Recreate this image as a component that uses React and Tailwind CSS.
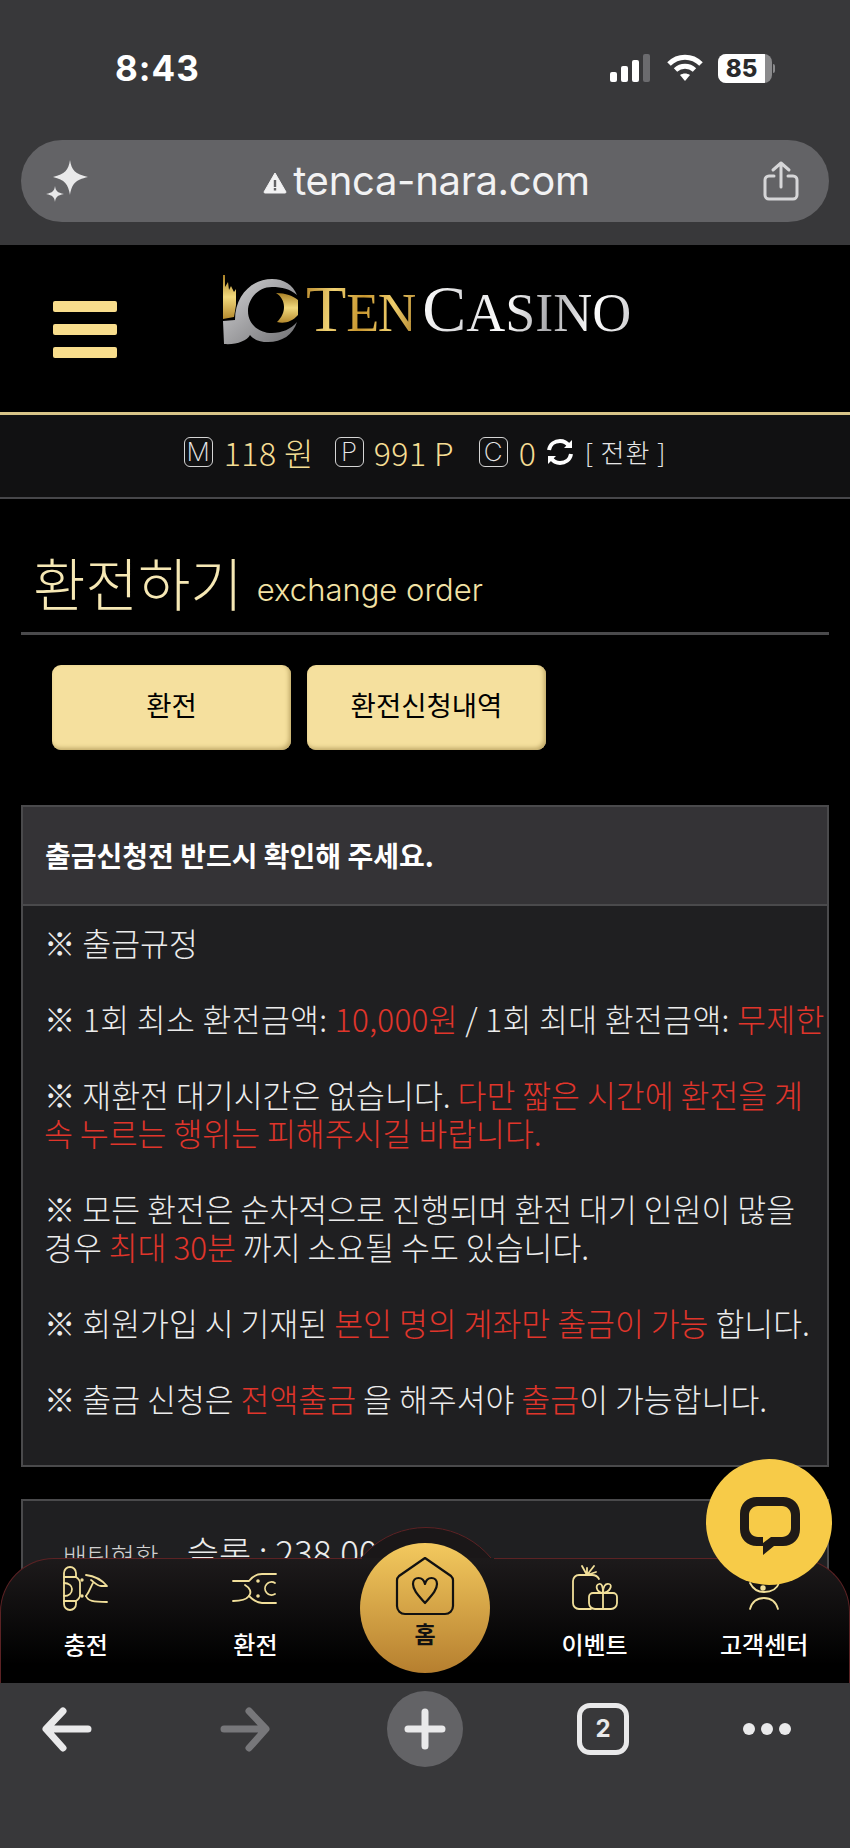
import React from "react";

const ko = "font-['Noto_Sans_CJK_KR','Noto_Sans',sans-serif]";

function Sparkles() {
  return (
    <svg width="44" height="44" viewBox="0 0 44 44" className="shrink-0 text-[#e9e9ea]" fill="currentColor">
      <path d="M24 1 C25.500 11 29 15 42 18 C29 21 26 25 24 36 C22 25 19 21 7 18 C19 15 22.500 11 24 1Z" />
      <path d="M9 27 C9.800 32 11 33.500 18 35 C11 36.500 9.800 38 9 43 C8.200 38 7 36.500 0 35 C7 33.500 8.200 32 9 27Z" />
    </svg>
  );
}

function Share() {
  return (
    <svg width="36" height="40" viewBox="0 0 36 40" fill="none" stroke="#d6d6d8" strokeWidth="3" strokeLinecap="round" strokeLinejoin="round" className="shrink-0">
      <path d="M18 26 V2 M10 9 L18 2 L26 9" />
      <path d="M11 15 H6 A4 4 0 0 0 2 19 V34 A4 4 0 0 0 6 38 H30 A4 4 0 0 0 34 34 V19 A4 4 0 0 0 30 15 H25" />
    </svg>
  );
}

function StatusBar() {
  return (
    <div className="flex h-[54px] mt-[54px] items-start justify-between pl-[115px] pr-[75px]">
      <span className="font-['Inter',sans-serif] text-[35px] leading-[29px] font-bold text-white tracking-[1px]">8:43</span>
      <div className="flex items-start gap-[15px]">
        <svg width="42" height="28" viewBox="0 0 42 28" className="shrink-0">
          <rect x="0" y="18" width="7" height="10" rx="2" fill="#fff" />
          <rect x="11" y="12" width="7" height="16" rx="2" fill="#fff" />
          <rect x="22" y="6" width="7" height="22" rx="2" fill="#fff" />
          <rect x="33" y="0" width="7" height="28" rx="2" fill="#6b6b6e" />
        </svg>
        <svg width="36" height="28" viewBox="0 0 36 28" fill="none" stroke="#fff" strokeWidth="5" className="shrink-0">
          <path d="M2 10 C11 1 25 1 34 10" />
          <path d="M8.500 16 C14 11 22 11 27.500 16" />
          <path d="M18 27 L13 21 C16 19 20 19 23 21 Z" fill="#fff" stroke="none" />
        </svg>
        <div className="flex items-center">
          <div className="relative flex h-[29px] w-[54px] items-center overflow-hidden rounded-[8px] bg-[#8a8a8c]">
            <div className="flex h-full w-[47px] items-center justify-center bg-white font-['Inter',sans-serif] text-[24px] font-extrabold text-[#2a2a2c]">85</div>
          </div>
          <div className="ml-[1px] h-[9px] w-[2px] rounded-r-full bg-[#8a8a8c]" />
        </div>
      </div>
    </div>
  );
}

function BrowserTop() {
  return (
    <div className="flex h-[245px] shrink-0 flex-col justify-between bg-[#38383a]">
      <StatusBar />
      <div className="mx-[21px] mb-[23px] flex h-[82px] items-center justify-between rounded-[41px] bg-[#636366] pl-[25px] pr-[30px]">
        <Sparkles />
        <div className="flex items-center gap-[6px]">
          <svg width="24" height="22" viewBox="0 0 24 22" className="shrink-0 mt-[3px]">
            <path d="M12 1 L23 20 Q23 21 22 21 H2 Q1 21 1 20 Z" fill="#f2f2f3" stroke="#f2f2f3" strokeLinejoin="round" />
            <rect x="10.800" y="8" width="2.400" height="7" fill="#636366" />
            <rect x="10.800" y="16" width="2.400" height="2.500" fill="#636366" />
          </svg>
          <span className="font-['Inter',sans-serif] text-[40px] leading-none text-[#f2f2f3] tracking-[-0.3px]">tenca-nara.com</span>
        </div>
        <Share />
      </div>
    </div>
  );
}

function Logo() {
  return (
    <div className="flex items-start">
      <svg width="78" height="70" viewBox="0 0 78 70" className="shrink-0">
        <defs>
          <linearGradient id="lg" x1="0" y1="0" x2="0" y2="1">
            <stop offset="0" stopColor="#a98025" />
            <stop offset="0.5" stopColor="#f2d97c" />
            <stop offset="1" stopColor="#b58a2e" />
          </linearGradient>
          <linearGradient id="ls" x1="0" y1="0" x2="1" y2="1">
            <stop offset="0" stopColor="#d4d4d6" />
            <stop offset="1" stopColor="#6f6f72" />
          </linearGradient>
        </defs>
        <path d="M1 0 L3 0 L3 12 L6 7 L7 15 L9 11 L12 17 L14 14 L14 30 L12 42 L1 44 Z" fill="url(#lg)" />
        <path d="M13 45 C13 20 30 4 50 4 C62 4 71 10 75 20 C68 14 60 12 50 12 C36 12 26 24 26 36 C26 50 38 58 50 58 C60 58 69 54 75 47 C71 60 60 67 46 67 C38 67 32 65 28 60 C25 66 14 70 2 69 L1 46 Z" fill="url(#ls)" />
        <path d="M54 18 C64 18 71 21 76 25 L76 40 C70 47 62 49 55 47 C60 42 62 37 62 32 C62 26 59 21 54 18 Z" fill="url(#lg)" />
      </svg>
      <div className="ml-[6px] mt-[1px] flex items-baseline font-['Liberation_Serif',serif] leading-[66px]">
        <span className="bg-[linear-gradient(100deg,#b98a2d,#f0d273,#c8962f,#efce6c,#a87a25)] bg-clip-text text-transparent">
          <span className="text-[66px]">T</span>
          <span className="text-[54px] tracking-[-1.500px]">EN</span>
        </span>
        <span className="ml-[7px] bg-[linear-gradient(100deg,#ffffff,#d9d9db,#ffffff,#a9a9ac,#ffffff,#c8c8cb)] bg-clip-text text-transparent">
          <span className="text-[66px]">C</span>
          <span className="text-[54px]">ASINO</span>
        </span>
      </div>
    </div>
  );
}

function Header() {
  return (
    <div className="flex h-[167px] items-start bg-black pl-[53px]">
      <div className="mt-[56px] flex w-[64px] flex-col gap-[12px]">
        <div className="h-[11px] rounded-[2px] bg-[#f8dd8c]" />
        <div className="h-[11px] rounded-[2px] bg-[#f8dd8c]" />
        <div className="h-[11px] rounded-[2px] bg-[#f8dd8c]" />
      </div>
      <div className="ml-[105px] mt-[30px]">
        <Logo />
      </div>
    </div>
  );
}

function Badge({ children }) {
  return (
    <span className="flex h-[30px] w-[29px] items-center justify-center rounded-[6px] border border-[#d5d5d5] font-['Inter',sans-serif] text-[26px] font-extralight leading-none text-[#e8e8e8]">
      {children}
    </span>
  );
}

function Balance() {
  return (
    <div className={`flex h-[87px] items-center justify-center border-t-[3px] border-b-[2px] border-t-[#d8c488] border-b-[#47474a] bg-[#111112] pb-[8px] ${ko} text-[32px] font-light leading-none text-[#f5dd94]`}>
      <Badge>M</Badge>
      <span className="ml-[11px] w-[90px] whitespace-nowrap tracking-[0.5px]">118 원</span>
      <span className="ml-[21px]"><Badge>P</Badge></span>
      <span className="ml-[10px] w-[84px] whitespace-nowrap tracking-[0.5px]">991 P</span>
      <span className="ml-[21px]"><Badge>C</Badge></span>
      <span className="ml-[11px] w-[16px]">0</span>
      <svg width="28" height="28" viewBox="0 0 28 28" fill="none" stroke="#fff" strokeWidth="4" className="ml-[11px] shrink-0">
        <path d="M3 12 C4 6 9 3 14 3 C18 3 21 5 23 8" />
        <path d="M25 16 C24 22 19 25 14 25 C10 25 7 23 5 20" />
        <path d="M26 2 V10 H18 Z M2 26 V18 H10 Z" fill="#fff" stroke="none" />
      </svg>
      <span className="ml-[11px] whitespace-nowrap text-[26px] tracking-[1px] text-[#e6e6e6]">[ 전환 ]</span>
    </div>
  );
}

function Title() {
  return (
    <div className="mx-[21px] flex h-[136px] items-end border-b-[3px] border-[#4a4a4c] pb-[21px] pl-[12px]">
      <h1 className={`${ko} text-[57px] font-light leading-[60px] text-[#f6e8b4]`}>환전하기</h1>
      <span className="ml-[14px] mb-[3px] font-['Inter',sans-serif] text-[31px] font-light leading-[36px] text-[#f3e3a6]">exchange order</span>
    </div>
  );
}

function TabButton({ children }) {
  return (
    <button className={`flex h-[85px] w-[239px] items-center justify-center rounded-[9px] bg-[#f5e09e] shadow-[inset_-2px_-2px_4px_#bfa868] ${ko} text-[27.500px] text-black pb-[6px]`}>
      {children}
    </button>
  );
}

const R = ({ children }) => <span className="text-[#e0352b]">{children}</span>;

function Notice() {
  return (
    <div className="mx-[21px] mt-[55px] border-2 border-[#4a4a4c]">
      <div className={`flex h-[99px] items-center border-b-2 border-[#4a4a4c] bg-[#343336] pl-[22px] pb-[2px] ${ko} text-[28px] font-bold text-white`}>
        출금신청전 반드시 확인해 주세요.
      </div>
      <div className={`bg-[#1f1f21] pl-[21px] pt-[18px] pb-[47px] ${ko} text-[31.400px] font-light leading-[38px] text-[#ececec] whitespace-nowrap`}>
        <p>※ 출금규정</p>
        <p className="mt-[38px] tracking-[0.35px]">※ 1회 최소 환전금액: <R>10,000원</R> / 1회 최대 환전금액: <R>무제한</R></p>
        <p className="mt-[38px]">※ 재환전 대기시간은 없습니다. <R>다만 짧은 시간에 환전을 계<br />속 누르는 행위는 피해주시길 바랍니다.</R></p>
        <p className="mt-[38px]">※ 모든 환전은 순차적으로 진행되며 환전 대기 인원이 많을<br />경우 <R>최대 30분</R> 까지 소요될 수도 있습니다.</p>
        <p className="mt-[38px]">※ 회원가입 시 기재된 <R>본인 명의 계좌만 출금이 가능</R> 합니다.</p>
        <p className="mt-[38px]">※ 출금 신청은 <R>전액출금</R> 을 해주셔야 <R>출금</R>이 가능합니다.</p>
      </div>
    </div>
  );
}

function Status2() {
  return (
    <div className={`mx-[21px] mt-[32px] h-[200px] border-2 border-[#4a4a4c] bg-[#1f1f21] pl-[40px] pt-[26px] ${ko} whitespace-nowrap leading-[50px]`}>
      <span className="text-[26px] font-light text-[#cfcfcf]">배팅현황</span>
      <span className="ml-[28px] text-[35px] font-light text-[#ececec]">슬롯 : 238,000</span>
    </div>
  );
}

const gold = "#f1df9a";

function IconCharge() {
  return (
    <svg width="46" height="46" viewBox="0 0 46 46" fill="none" stroke={gold} strokeWidth="1.800" strokeLinecap="round" strokeLinejoin="round">
      <path d="M1 12 V8 A6 6 0 0 1 13 8 V12" />
      <path d="M1 12 H13 C16 14 17 15 17 18 V30 C17 33 16 34 13 36 H1 Z" />
      <path d="M1 36 V39 A6 6 0 0 0 13 39 V36" />
      <path d="M1 18 C6 18 9 21 9 24 C9 28 6 31 1 31" />
      <circle cx="19" cy="15" r="0.800" fill={gold} />
      <circle cx="19" cy="31" r="0.800" fill={gold} />
      <path d="M23 10 C32 11 38 14 44 21 H38 C34 21 31 17 28 15" />
      <path d="M23 31 C27 26 28 21 30 18" />
      <path d="M23 31 C25 36 30 37 44 37" />
    </svg>
  );
}

function IconExchange() {
  return (
    <svg width="46" height="46" viewBox="0 0 46 46" fill="none" stroke={gold} strokeWidth="1.800" strokeLinecap="round" strokeLinejoin="round">
      <path d="M44 9 H30 C24 9 20 12 17 16 H1" />
      <path d="M13 20 C18 23 20 27 17 31 C14 35 8 36 1 36 " />
      <path d="M17 31 C20 34 24 38 30 38 H44" />
      <path d="M43 18 A6.500 6.500 0 1 0 43 29" />
      <circle cx="26" cy="16" r="0.900" fill={gold} />
      <circle cx="26" cy="31" r="0.900" fill={gold} />
    </svg>
  );
}

function IconGift() {
  return (
    <svg width="46" height="46" viewBox="0 0 46 46" fill="none" stroke={gold} strokeWidth="1.800" strokeLinecap="round" strokeLinejoin="round">
      <path d="M19 44 H7 A6 6 0 0 1 1 38 V16 A6 6 0 0 1 7 10 H20 C24 10 26 12 27 14" />
      <path d="M10 1 L15 10 L22 1 M15 10 V3 M15 10 L24 7" />
      <path d="M23 44 A6 6 0 0 1 17 38 V32 A4 4 0 0 1 21 28 H41 A4 4 0 0 1 45 32 V38 A6 6 0 0 1 39 44 Z" />
      <path d="M31 28 V44" />
      <path d="M31 28 C24 27 23 20 27 19 C30 18 31 22 31 28 C31 22 33 18 37 19 C41 20 38 27 31 28 Z" />
    </svg>
  );
}

function IconSupport() {
  return (
    <svg width="46" height="46" viewBox="0 0 46 46" fill="none" stroke={gold} strokeWidth="1.800" strokeLinecap="round" strokeLinejoin="round">
      <path d="M9 18 C12 24 16 27 23 27 C30 27 36 24 38 18" />
      <circle cx="22" cy="23" r="1.800" fill={gold} />
      <path d="M9 44 C11 37 16 33 23 33 C30 33 35 37 37 44" />
    </svg>
  );
}

function NavItem({ icon, label }) {
  return (
    <div className="flex w-[170px] flex-col items-center">
      <div className="h-[46px] w-[46px]">{icon}</div>
      <span className={`mt-[15px] ${ko} text-[24px] font-medium leading-[36px] text-white`}>{label}</span>
    </div>
  );
}

function BottomNav() {
  return (
    <div className="absolute inset-x-0 bottom-0 h-[156px]">
      <div className="absolute left-[341px] top-0 h-[170px] w-[170px] rounded-full border border-[#5c2224] bg-[#1a1718]" />
      <div className="absolute inset-x-0 bottom-0 h-[125px] rounded-t-[54px] border-x border-t border-[#5c2224] bg-[linear-gradient(180deg,#1d1a1b_0%,#000_85%)]">
        <div className="absolute left-[361px] top-[-1px] h-[2px] w-[132px] bg-[#1c191a]" />
        <div className="flex pt-[6px]">
          <NavItem icon={<IconCharge />} label="충전" />
          <NavItem icon={<IconExchange />} label="환전" />
          <div className="w-[170px]" />
          <NavItem icon={<IconGift />} label="이벤트" />
          <NavItem icon={<IconSupport />} label="고객센터" />
        </div>
      </div>
      <div className="absolute left-[360px] top-[16px] flex h-[130px] w-[130px] flex-col items-center rounded-full bg-[linear-gradient(180deg,#f3c95e,#b67f2f)] pt-[13px]">
        <svg width="60" height="60" viewBox="0 0 60 60" fill="none" stroke="#111" strokeWidth="2.200" strokeLinejoin="round">
          <path d="M30 2 L56 20 C57 21 58 22 58 24 V50 A8 8 0 0 1 50 58 H10 A8 8 0 0 1 2 50 V24 C2 22 3 21 4 20 Z" />
          <path d="M30 47 C23 39 18 34 18 28 C18 24 20.500 22 23.500 22 C26.500 22 29 24 30 28 C31 24 33.500 22 36.500 22 C39.500 22 42 24 42 28 C42 34 37 39 30 47 Z" />
        </svg>
        <span className={`mt-[1px] ${ko} text-[23px] font-bold leading-[32px] text-[#111]`}>홈</span>
      </div>
    </div>
  );
}

function ChatButton() {
  return (
    <div className="absolute right-[18px] top-[1214px] flex h-[126px] w-[126px] items-center justify-center rounded-full bg-[#f7cb48]">
      <svg width="60" height="60" viewBox="0 0 60 60" fill="none" className="mt-[7px] ml-[1px]">
        <path fillRule="evenodd" clipRule="evenodd" fill="#1f1a17" d="M17 1 H43 C53 1 60 8 60 18 V33 C60 43 53 50 43 50 H34 L23 59 V50 H17 C7 50 0 43 0 33 V18 C0 8 7 1 17 1 Z M18 10 C13 10 9 14 9 19 V32 C9 37 13 41 18 41 H23 V47 L31 41 H42 C47 41 51 37 51 32 V19 C51 14 47 10 42 10 Z" />
      </svg>
    </div>
  );
}

function BrowserBottom() {
  return (
    <div className="flex h-[165px] shrink-0 items-start bg-[#38383a] pl-[42px] pt-[8px]">
      <svg width="50" height="76" viewBox="0 0 50 76" fill="none" stroke="#e9e9ea" strokeWidth="7" strokeLinecap="round" strokeLinejoin="round" className="shrink-0">
        <path d="M46 38 H5 M21 20 L4 38 L21 57" />
      </svg>
      <svg width="50" height="76" viewBox="0 0 50 76" fill="none" stroke="#77777a" strokeWidth="7" strokeLinecap="round" strokeLinejoin="round" className="ml-[128px] shrink-0">
        <path d="M4 38 H45 M29 20 L46 38 L29 57" />
      </svg>
      <div className="ml-[117px] flex h-[76px] w-[76px] shrink-0 items-center justify-center rounded-full bg-[#636366]">
        <svg width="42" height="42" viewBox="0 0 42 42" stroke="#e9e9ea" strokeWidth="7" strokeLinecap="round">
          <path d="M21 4 V38 M4 21 H38" />
        </svg>
      </div>
      <div className="ml-[114px] mt-[12px] flex h-[52px] w-[52px] shrink-0 items-center justify-center rounded-[13px] border-[5px] border-[#e9e9ea] font-['Inter',sans-serif] text-[24px] font-bold text-[#e9e9ea]">2</div>
      <div className="ml-[114px] mt-[32px] flex gap-[6px]">
        <div className="h-[12px] w-[12px] rounded-full bg-[#e9e9ea]" />
        <div className="h-[12px] w-[12px] rounded-full bg-[#e9e9ea]" />
        <div className="h-[12px] w-[12px] rounded-full bg-[#e9e9ea]" />
      </div>
    </div>
  );
}

export default function App() {
  return (
    <div className="flex h-[1848px] w-[850px] flex-col overflow-hidden bg-black">
      <BrowserTop />
      <main className="relative min-h-0 flex-1 overflow-hidden bg-black">
        <Header />
        <Balance />
        <Title />
        <div className="flex gap-[16px] pl-[52px] pt-[30px]">
          <TabButton>환전</TabButton>
          <TabButton>환전신청내역</TabButton>
        </div>
        <Notice />
        <Status2 />
        <BottomNav />
        <ChatButton />
      </main>
      <BrowserBottom />
    </div>
  );
}
